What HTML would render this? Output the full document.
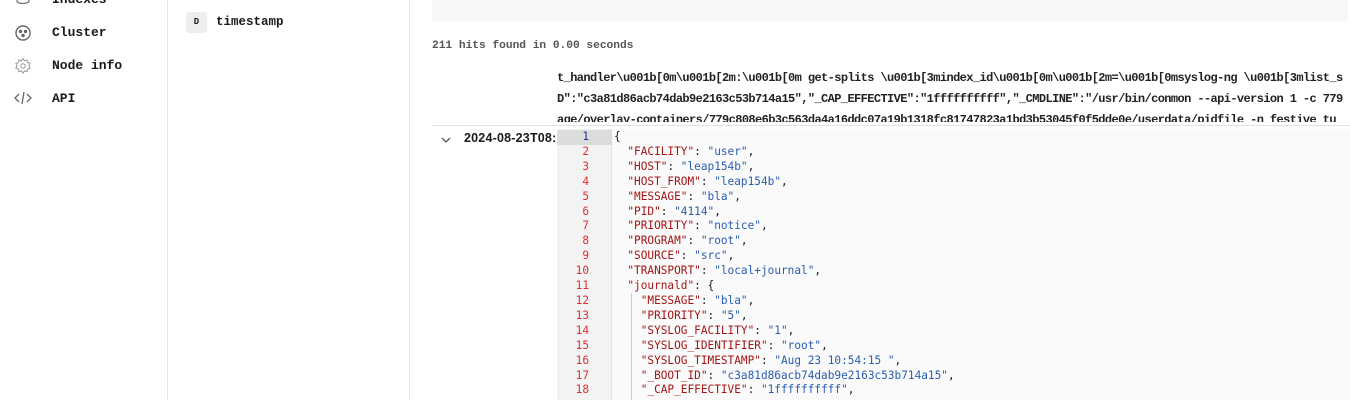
<!DOCTYPE html>
<html><head><meta charset="utf-8"><style>
*{margin:0;padding:0;box-sizing:border-box}
body{width:1350px;height:400px;overflow:hidden;background:#fff;font-family:"Liberation Mono",monospace;position:relative;color:#1a1a1a}
.a{position:absolute;white-space:nowrap}
.nav{font-weight:bold;font-size:13px;left:52px}
.code{font-family:"DejaVu Sans Mono",monospace;font-size:11.1px;line-height:14.9px}
.k{color:#a31515}.s{color:#2a5db0}
</style></head><body>
<div class="a" style="left:167px;top:0;width:1px;height:400px;background:#e5e5e5"></div>
<div class="a" style="left:409px;top:0;width:1px;height:400px;background:#e5e5e5"></div>
<div class="a nav" style="top:-8px">Indexes</div>
<div class="a nav" style="top:25px">Cluster</div>
<div class="a nav" style="top:58px">Node info</div>
<div class="a nav" style="top:91px">API</div>
<svg class="a" style="left:14px;top:-8px" width="18" height="14" viewBox="0 0 18 14" fill="none" stroke="#777" stroke-width="1.3"><ellipse cx="9" cy="4" rx="6" ry="2.5"/><path d="M3 4v5c0 1.4 2.7 2.5 6 2.5s6-1.1 6-2.5V4"/></svg>
<svg class="a" style="left:14px;top:24px" width="18" height="18" viewBox="0 0 18 18" fill="none" stroke="#666" stroke-width="1.4"><circle cx="9" cy="9" r="7"/><circle cx="6.5" cy="7.5" r="1" fill="#666"/><circle cx="11.5" cy="7.5" r="1" fill="#666"/><circle cx="9" cy="11.5" r="1" fill="#666"/></svg>
<svg class="a" style="left:14px;top:57px" width="18" height="18" viewBox="0 0 24 24" fill="none" stroke="#999" stroke-width="1.3"><circle cx="12" cy="12" r="3"/><path d="M12 2l2 3 3.5-1 .5 3.5 3.5 1-1.5 3.5 1.5 3-3.5 1-.5 3.5-3.5-1-2 3-2-3-3.5 1-.5-3.5-3.5-1 1.5-3-1.5-3.5 3.5-1 .5-3.5 3.5 1z"/></svg>
<svg class="a" style="left:14px;top:90px" width="18" height="16" viewBox="0 0 18 16" fill="none" stroke="#666" stroke-width="1.3"><path d="M5 4L1 8l4 4M13 4l4 4-4 4M10 2L8 14"/></svg>
<div class="a" style="left:186px;top:12px;width:21px;height:21px;background:#eee;border-radius:3px;font-size:9px;font-weight:bold;text-align:center;line-height:21px">D</div>
<div class="a" style="left:216px;top:15px;font-size:12.5px;font-weight:bold">timestamp</div>
<div class="a" style="left:432px;top:0;width:916px;height:21px;background:#f7f7f8"></div>
<div class="a" style="left:432px;top:40px;font-size:11.2px;color:#555;font-weight:bold">211 hits found in 0.00 seconds</div>
<div class="a" style="left:557px;top:68px;font-size:12px;letter-spacing:-0.6px;line-height:21px;color:#222;width:793px;height:54px;overflow:hidden;font-weight:bold">t_handler\u001b[0m\u001b[2m:\u001b[0m get-splits \u001b[3mindex_id\u001b[0m\u001b[2m=\u001b[0msyslog-ng \u001b[3mlist_s<br>D":"c3a81d86acb74dab9e2163c53b714a15","_CAP_EFFECTIVE":"1ffffffffff","_CMDLINE":"/usr/bin/conmon --api-version 1 -c 779<br>age/overlay-containers/779c808e6b3c563da4a16ddc07a19b1318fc81747823a1bd3b53045f0f5dde0e/userdata/pidfile -n festive_tu</div>
<div class="a" style="left:432px;top:125px;width:918px;height:1px;background:#e2e2e2"></div>
<svg class="a" style="left:440px;top:135px" width="12" height="10" viewBox="0 0 12 10" fill="none" stroke="#555" stroke-width="1.3"><path d="M2 3l4 4 4-4"/></svg>
<div class="a" style="left:464px;top:131px;font-size:12.5px;font-weight:bold;font-family:'Liberation Sans',sans-serif;letter-spacing:.2px">2024-08-23T08:</div>
<div class="a" style="left:557px;top:129px;width:793px;height:271px;background:#fafafa"></div>
<div class="a" style="left:557px;top:129px;width:55px;height:271px;background:#f3f3f3;border-right:1px solid #e4e4e4"></div>
<div class="a" style="left:557px;top:130px;width:55px;height:15px;background:#dcdcdc"></div>
<div class="a code" style="left:557px;top:130px;width:52px;text-align:right;padding-right:20px;color:#e03030"><span style="color:#1e3a8a">1</span><br>2<br>3<br>4<br>5<br>6<br>7<br>8<br>9<br>10<br>11<br>12<br>13<br>14<br>15<br>16<br>17<br>18</div>
<div class="a" style="left:631px;top:293px;width:1px;height:107px;background:#ccc"></div>
<div class="a code" style="left:614px;top:130px">{<br>
&nbsp;&nbsp;<span class="k">"FACILITY"</span>: <span class="s">"user"</span>,<br>
&nbsp;&nbsp;<span class="k">"HOST"</span>: <span class="s">"leap154b"</span>,<br>
&nbsp;&nbsp;<span class="k">"HOST_FROM"</span>: <span class="s">"leap154b"</span>,<br>
&nbsp;&nbsp;<span class="k">"MESSAGE"</span>: <span class="s">"bla"</span>,<br>
&nbsp;&nbsp;<span class="k">"PID"</span>: <span class="s">"4114"</span>,<br>
&nbsp;&nbsp;<span class="k">"PRIORITY"</span>: <span class="s">"notice"</span>,<br>
&nbsp;&nbsp;<span class="k">"PROGRAM"</span>: <span class="s">"root"</span>,<br>
&nbsp;&nbsp;<span class="k">"SOURCE"</span>: <span class="s">"src"</span>,<br>
&nbsp;&nbsp;<span class="k">"TRANSPORT"</span>: <span class="s">"local+journal"</span>,<br>
&nbsp;&nbsp;<span class="k">"journald"</span>: {<br>
&nbsp;&nbsp;&nbsp;&nbsp;<span class="k">"MESSAGE"</span>: <span class="s">"bla"</span>,<br>
&nbsp;&nbsp;&nbsp;&nbsp;<span class="k">"PRIORITY"</span>: <span class="s">"5"</span>,<br>
&nbsp;&nbsp;&nbsp;&nbsp;<span class="k">"SYSLOG_FACILITY"</span>: <span class="s">"1"</span>,<br>
&nbsp;&nbsp;&nbsp;&nbsp;<span class="k">"SYSLOG_IDENTIFIER"</span>: <span class="s">"root"</span>,<br>
&nbsp;&nbsp;&nbsp;&nbsp;<span class="k">"SYSLOG_TIMESTAMP"</span>: <span class="s">"Aug 23 10:54:15 "</span>,<br>
&nbsp;&nbsp;&nbsp;&nbsp;<span class="k">"_BOOT_ID"</span>: <span class="s">"c3a81d86acb74dab9e2163c53b714a15"</span>,<br>
&nbsp;&nbsp;&nbsp;&nbsp;<span class="k">"_CAP_EFFECTIVE"</span>: <span class="s">"1ffffffffff"</span>,</div>
</body></html>
